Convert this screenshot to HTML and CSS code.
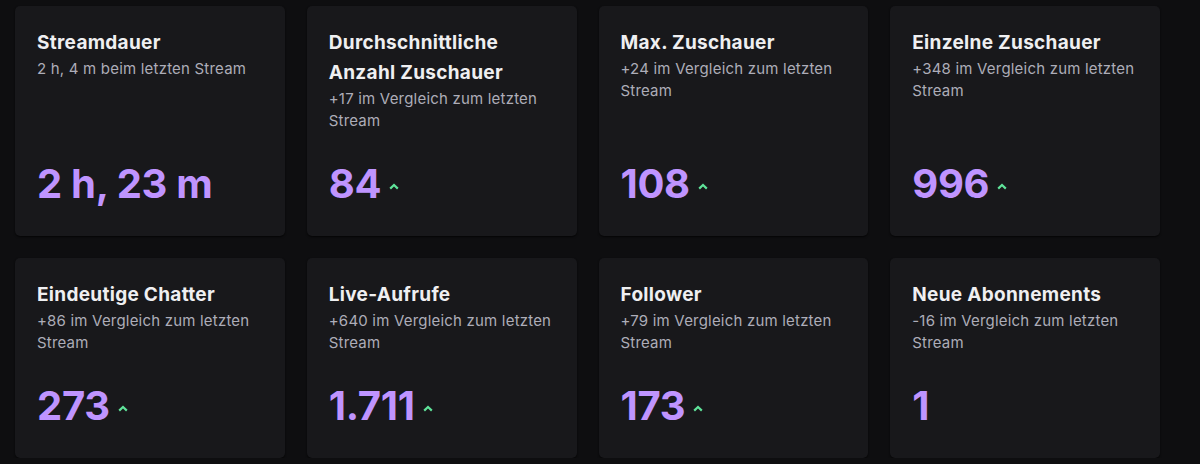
FILE: index.html
```html
<!DOCTYPE html>
<html lang="de">
<head>
<meta charset="utf-8">
<title>Stream-Statistiken</title>
<link rel="stylesheet" href="styles.css">
</head>
<body>
<div class="grid">
  <div class="card">
    <div class="title">Streamdauer</div>
    <div class="sub">2 h, 4 m beim letzten Stream</div>
    <div class="value"><span>2 h, 23 m</span></div>
  </div>
  <div class="card">
    <div class="title">Durchschnittliche Anzahl Zuschauer</div>
    <div class="sub">+17 im Vergleich zum letzten Stream</div>
    <div class="value"><span>84</span><svg class="up" width="10" height="7" viewBox="0 0 10 7"><polyline points="1.2,5.6 5,2 8.8,5.6" fill="none" stroke="#5fe39a" stroke-width="2.2" stroke-linejoin="miter"/></svg></div>
  </div>
  <div class="card">
    <div class="title">Max. Zuschauer</div>
    <div class="sub">+24 im Vergleich zum letzten Stream</div>
    <div class="value"><span>108</span><svg class="up" width="10" height="7" viewBox="0 0 10 7"><polyline points="1.2,5.6 5,2 8.8,5.6" fill="none" stroke="#5fe39a" stroke-width="2.2" stroke-linejoin="miter"/></svg></div>
  </div>
  <div class="card">
    <div class="title">Einzelne Zuschauer</div>
    <div class="sub">+348 im Vergleich zum letzten Stream</div>
    <div class="value"><span>996</span><svg class="up" width="10" height="7" viewBox="0 0 10 7"><polyline points="1.2,5.6 5,2 8.8,5.6" fill="none" stroke="#5fe39a" stroke-width="2.2" stroke-linejoin="miter"/></svg></div>
  </div>
  <div class="card">
    <div class="title">Eindeutige Chatter</div>
    <div class="sub">+86 im Vergleich zum letzten Stream</div>
    <div class="value"><span>273</span><svg class="up" width="10" height="7" viewBox="0 0 10 7"><polyline points="1.2,5.6 5,2 8.8,5.6" fill="none" stroke="#5fe39a" stroke-width="2.2" stroke-linejoin="miter"/></svg></div>
  </div>
  <div class="card">
    <div class="title">Live-Aufrufe</div>
    <div class="sub">+640 im Vergleich zum letzten Stream</div>
    <div class="value"><span>1.711</span><svg class="up" width="10" height="7" viewBox="0 0 10 7"><polyline points="1.2,5.6 5,2 8.8,5.6" fill="none" stroke="#5fe39a" stroke-width="2.2" stroke-linejoin="miter"/></svg></div>
  </div>
  <div class="card">
    <div class="title">Follower</div>
    <div class="sub">+79 im Vergleich zum letzten Stream</div>
    <div class="value"><span>173</span><svg class="up" width="10" height="7" viewBox="0 0 10 7"><polyline points="1.2,5.6 5,2 8.8,5.6" fill="none" stroke="#5fe39a" stroke-width="2.2" stroke-linejoin="miter"/></svg></div>
  </div>
  <div class="card">
    <div class="title">Neue Abonnements</div>
    <div class="sub">-16 im Vergleich zum letzten Stream</div>
    <div class="value"><span>1</span></div>
  </div>
</div>
</body>
</html>
```
FILE: styles.css
```css
html, body {
  margin: 0;
  padding: 0;
  background: #0e0e10;
}
body {
  font-family: Inter, "Noto Sans", "Liberation Sans", sans-serif;
  padding: 6px 0 0 15px;
}
.grid {
  width: 1145px;
  display: grid;
  grid-template-columns: repeat(4, 1fr);
  column-gap: 22px;
  row-gap: 22px;
}
.card {
  background: #18181b;
  border-radius: 5px;
  box-shadow: 0 1px 2px rgba(0, 0, 0, 0.7);
  padding: 22px 22px 28px 22px;
  display: flex;
  flex-direction: column;
}
.title {
  color: #efeff1;
  font-size: 19px;
  font-weight: 700;
  line-height: 30px;
  letter-spacing: 0.3px;
}
.sub {
  color: #adadb8;
  font-size: 15px;
  line-height: 22px;
  letter-spacing: 0.2px;
}
.value {
  margin-top: auto;
  padding-top: 28px;
  display: flex;
  align-items: center;
  color: #bf94ff;
  font-size: 40px;
  font-weight: 700;
  line-height: 48px;
  letter-spacing: -0.3px;
}
.up {
  margin-left: 8px;
  margin-top: 4px;
}
```
